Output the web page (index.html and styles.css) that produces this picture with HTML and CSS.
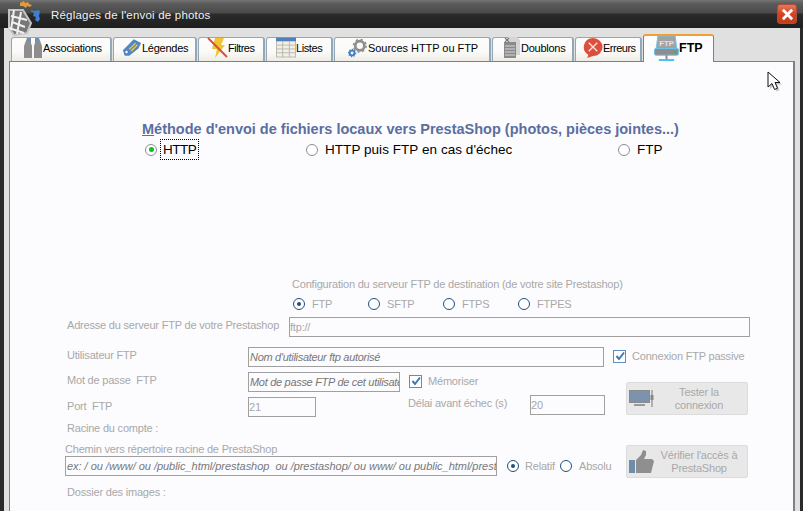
FILE: index.html
```html
<!DOCTYPE html>
<html lang="fr">
<head>
<meta charset="utf-8">
<title>Réglages de l'envoi de photos</title>
<link rel="stylesheet" href="styles.css">
</head>
<body>
<div class="window">
  <svg class="logo" width="44" height="38" viewBox="0 0 44 38">
    <path d="M20 3l4-2 1 2 3-1 1 2 3 1-2 2-3-1-1 2-3-2-3 0z" fill="#e09a3a"/>
    <path d="M31 10l4 1 3-1 2 1-1 5 1 3-2 3-3-2 1-3-3-1 1-3-3-2z" fill="#3f7fd0"/>
    <g fill="none" stroke="#c4c4c4" stroke-width="2">
      <path d="M9 10l14 0 8 13-4 10-13 2-5-7z" fill="#777"/>
      <path d="M11 16l16 4M12 22l13 5M9 28l15 5M14 10l-3 20M21 12l-4 22" stroke="#f0f0f0"/>
    </g>
  </svg>
  <header class="titlebar">
    <h1 class="title">Réglages de l'envoi de photos</h1>
    <button class="close" aria-label="Fermer">
      <svg width="13" height="13" viewBox="0 0 14 14"><path d="M2 2l10 10M12 2L2 12" stroke="#fff" stroke-width="3" fill="none"/></svg>
    </button>
  </header>
  <div class="client">
    <nav class="tabs">
      <div class="tab w-assoc">
        <svg class="ico" width="20" height="22" viewBox="0 0 20 22"><path d="M4 1h4v5l1 3v12H1V9z" fill="#8e8e8e"/><path d="M12 1h4l3 8v12h-8V9l1-3z" fill="#8e8e8e"/><path d="M4 1h4v3H4zM12 1h4v3h-4z" fill="#6f8fb5"/></svg>
        <span>Associations</span>
      </div>
      <div class="tab w-leg">
        <svg class="ico" width="20" height="19" viewBox="0 0 22 20"><path d="M1 13L13 1l8 4-3 6-10 8H3z" fill="#4f87c5"/><path d="M8 12l7-7M10 14l7-7" stroke="#e8c04a" stroke-width="1.6"/><circle cx="5" cy="15" r="1.3" fill="#fff"/></svg>
        <span>Légendes</span>
      </div>
      <div class="tab w-fil">
        <svg class="ico" width="21" height="22" viewBox="0 0 21 22"><path d="M8 1h9l-3 7h4L8 21l2-9H5z" fill="#f2c230"/><path d="M1 1l19 19" stroke="#d8503c" stroke-width="2"/></svg>
        <span>Filtres</span>
      </div>
      <div class="tab w-lis">
        <svg class="ico" width="20" height="21" viewBox="0 0 21 21"><rect x=".5" y=".5" width="20" height="20" fill="#f2efe6" stroke="#b8b8b0"/><rect width="21" height="4" fill="#4f81b8"/><path d="M7 4v17M14 4v17M0 8h21M0 12h21M0 16h21" stroke="#b8b8b0"/></svg>
        <span>Listes</span>
      </div>
      <div class="tab w-src">
        <svg class="ico" width="20" height="20" viewBox="0 0 22 21"><circle cx="13" cy="8" r="5" fill="none" stroke="#8e8e8e" stroke-width="3"/><circle cx="13" cy="8" r="7" fill="none" stroke="#8e8e8e" stroke-width="1.6" stroke-dasharray="2.5 3"/><circle cx="4.5" cy="16" r="2.6" fill="none" stroke="#3f7fc0" stroke-width="2"/><circle cx="4.5" cy="16" r="4" fill="none" stroke="#3f7fc0" stroke-width="1.2" stroke-dasharray="1.5 1.5"/></svg>
        <span>Sources HTTP ou FTP</span>
      </div>
      <div class="tab w-dbl">
        <svg class="ico" width="18" height="21" viewBox="0 0 18 21"><path d="M5 0h9l3 3v15H5z" fill="#d5d5d5"/><path d="M1 5h12v16H1z" fill="#8a8a8a"/><path d="M2 9h10M2 12h10M2 15h10M2 18h10" stroke="#d8d8d8"/><path d="M2 1l4 4M6 1L2 5" stroke="#777" stroke-width="1.2"/></svg>
        <span>Doublons</span>
      </div>
      <div class="tab w-err">
        <svg class="ico" width="20" height="20" viewBox="0 0 21 21"><path d="M10.500 0a10 9.500 0 0 1 0 19l-6 2 1-3.500A10 9.500 0 0 1 10.500 0z" fill="#dd4f3d"/><path d="M6 5l9 9M15 5l-9 9" stroke="#fbe4de" stroke-width="1.4"/></svg>
        <span>Erreurs</span>
      </div>
      <div class="tab tab-active">
        <svg class="ico ico-ftp" width="25" height="26" viewBox="0 0 26 27">
          <path d="M4 1h18l2 15H2z" fill="#a2a2a2" stroke="#6cc4ec"/>
          <text x="13" y="11" class="ico-text">FTP</text>
          <rect x=".5" y="14" width="25" height="7" rx="1.500" fill="#8e8e8e" stroke="#6cc4ec"/>
          <rect x="21" y="17" width="2" height="2" fill="#4caf50"/>
          <path d="M13 21v4" stroke="#888" stroke-width="2"/>
          <path d="M5 26h16" stroke="#49c0f0" stroke-width="2"/>
        </svg>
        <span>FTP</span>
      </div>
    </nav>
    <main class="panel">
      <h2 class="method-title"><u>M</u>éthode d'envoi de fichiers locaux vers PrestaShop (photos, pièces jointes...)</h2>
      <div class="method-row">
        <label class="method m1"><i class="mradio on"></i><span class="focus">HTTP</span></label>
        <label class="method m2"><i class="mradio"></i><span>HTTP puis FTP en cas d'échec</span></label>
        <label class="method"><i class="mradio"></i><span>FTP</span></label>
      </div>

      <div class="form">
        <p class="cfg-title">Configuration du serveur FTP de destination (de votre site Prestashop)</p>
        <div class="proto-row">
          <label class="proto"><i class="radio on"></i>FTP</label>
          <label class="proto"><i class="radio"></i>SFTP</label>
          <label class="proto"><i class="radio"></i>FTPS</label>
          <label class="proto"><i class="radio"></i>FTPES</label>
        </div>
        <div class="row r-addr">
          <span class="lab lab-addr">Adresse du serveur FTP de votre Prestashop</span>
          <span class="inp i-addr">ftp://</span>
        </div>
        <div class="row r-user">
          <span class="lab lab-main">Utilisateur FTP</span>
          <span class="inp hint i-user">Nom d'utilisateur ftp autorisé</span>
          <label class="chk c-pass"><i class="box"><svg width="10" height="10" viewBox="0 0 10 10"><path d="M1.500 5l2.500 3 5-6.500" fill="none" stroke="#3f78b5" stroke-width="2"/></svg></i>Connexion FTP passive</label>
        </div>
        <div class="cred">
          <div class="cred-left">
            <div class="row r-pwd">
              <span class="lab lab-main">Mot de passe&nbsp; FTP</span>
              <span class="inp hint i-pwd">Mot de passe FTP de cet utilisateur</span>
              <label class="chk c-mem"><i class="box"><svg width="10" height="10" viewBox="0 0 10 10"><path d="M1.500 5l2.500 3 5-6.500" fill="none" stroke="#3f78b5" stroke-width="2"/></svg></i>Mémoriser</label>
            </div>
            <div class="row r-port">
              <span class="lab lab-main">Port&nbsp; FTP</span>
              <span class="inp i-port">21</span>
              <span class="lab lab-delay">Délai avant échec (s)</span>
              <span class="inp i-delay">20</span>
            </div>
          </div>
          <button class="btn b-test">
            <svg width="25" height="18" viewBox="0 0 25 18"><rect x=".5" y=".5" width="20" height="12" fill="#7d93ad" stroke="#8a8a8a"/><path d="M5 15h11" stroke="#999" stroke-width="2"/><path d="M23 0v17" stroke="#777"/><rect x="21.500" y="5" width="3" height="5" fill="#888"/></svg>
            <span>Tester la connexion</span>
          </button>
        </div>
        <p class="lab racine">Racine du compte :</p>
        <div class="path">
          <div class="path-left">
            <p class="lab chemin">Chemin vers répertoire racine de PrestaShop</p>
            <div class="path-row">
              <span class="inp hint i-path">ex: / ou /www/ ou /public_html/prestashop&nbsp; ou /prestashop/ ou www/ ou public_html/prestashop/</span>
              <label class="proto p-rel"><i class="radio on"></i>Relatif</label>
              <label class="proto p-abs"><i class="radio"></i>Absolu</label>
            </div>
          </div>
          <button class="btn b-check">
            <svg width="25" height="24" viewBox="0 0 25 24"><rect y="10" width="6" height="13" fill="#6f8cab"/><path d="M7 10l5-5 2-5 3 1 0 4-2 4h8l2 2-3 12H7z" fill="#8f8f8f"/></svg>
            <span>Vérifier l'accès à PrestaShop</span>
          </button>
        </div>
        <p class="lab dossier">Dossier des images :</p>
      </div>
    </main>
  </div>
  <svg class="cursor" width="16" height="22" viewBox="0 0 16 22"><path d="M3 3v15l4-3.500 2.500 6 3-1.300-2.500-5.700h5z" fill="#444" opacity=".3"/><path d="M1 1v15l4-3.500 2.500 6 3-1.300-2.500-5.700h5z" fill="#fff" stroke="#111"/></svg>
</div>
</body>
</html>
```
FILE: styles.css
```css
* { box-sizing: border-box; }
html, body { margin: 0; padding: 0; }
body {
  width: 803px;
  height: 511px;
  overflow: hidden;
  background: #2a2a2a;
  font-family: "Liberation Sans", Arial, sans-serif;
}
.window { position: relative; width: 803px; height: 511px; overflow: hidden; }
.logo { position: absolute; left: 0; top: 0; z-index: 3; }
.cursor { position: absolute; left: 767px; top: 71px; z-index: 3; }

.titlebar {
  height: 28px;
  display: flex;
  align-items: center;
  justify-content: space-between;
  padding: 2px 6px 0 51px;
  background: linear-gradient(#747474 0, #5a5a5a 4px, #4a4a4a 13px, #2b2b2b 14px, #1e1e1e 28px);
}
.title { margin: 0; font-size: 11.500px; font-weight: 400; color: #eef2f4; letter-spacing: .2px; }
.close {
  width: 20px;
  height: 20px;
  margin-top: -2px;
  padding: 0;
  display: flex;
  align-items: center;
  justify-content: center;
  border: 1px solid #a8503c;
  border-radius: 3px;
  background: linear-gradient(#e8765c, #d8421e 50%, #c43a1c);
}

.client {
  height: 483px;
  margin: 0 3px 0 4px;
  padding-top: 6px;
  background: #e0e0e0;
}
.tabs {
  display: flex;
  align-items: flex-end;
  height: 27px;
  padding-left: 7px;
  gap: 1px;
  position: relative;
  z-index: 1;
}
.tab {
  display: flex;
  align-items: center;
  height: 24px;
  padding-left: 10px;
  padding-bottom: 4px;
  border: 1px solid #92a8b8;
  border-bottom: 0;
  border-right-width: 2px;
  border-radius: 3px 3px 0 0;
  background: linear-gradient(#fcfcfa, #fafaf8 60%, #eeece4);
  font-size: 11px;
  letter-spacing: -.25px;
  color: #000;
  white-space: nowrap;
}
.ico { flex: none; }
.w-assoc { width: 101px; padding-left: 11px; }
.w-leg { width: 84px; padding-left: 8px; }
.w-fil { width: 67px; padding-left: 8px; letter-spacing: -.5px; }
.w-lis { width: 67px; padding-left: 9px; letter-spacing: -.4px; }
.w-src { width: 157px; padding-left: 13px; letter-spacing: -.05px; }
.w-dbl { width: 82px; padding-left: 10px; }
.w-err { width: 67px; padding-left: 7px; letter-spacing: -.5px; }
.tab-active {
  width: 71px;
  height: 28px;
  padding-left: 10px;
  padding-bottom: 3px;
  border: 1px solid #808080;
  border-top: 2px solid #f0a030;
  border-bottom: 0;
  background: #fcfcff;
  font-size: 12.500px;
  font-weight: 700;
  letter-spacing: 0;
  margin-bottom: -1px;
}
.ico-ftp { align-self: flex-end; margin-bottom: -2px; }
.ico-text { font-family: "Liberation Sans", sans-serif; font-size: 8px; fill: #e4e4e4; text-anchor: middle; }

.panel {
  height: 460px;
  width: 786px;
  margin-left: 5px;
  border: 1px solid #808080;
  border-width: 1px 2px 0 1px;
  background: #fcfcff;
  position: relative;
}
.method-title {
  margin: 0;
  padding: 60px 0 0 132px;
  font-size: 14.500px;
  line-height: 15px;
  font-weight: 700;
  color: #5a6ea0;
  white-space: nowrap;
}
.method-row {
  display: flex;
  height: 15px;
  margin-top: 5px;
  padding-left: 135px;
  font-size: 13.500px;
  letter-spacing: .05px;
  color: #000;
}
.method { display: flex; align-items: center; gap: 7px; }
.m1 { width: 161px; }
.m2 { width: 312px; }
.mradio {
  width: 12px;
  height: 12px;
  border: 1px solid #8a8f98;
  border-radius: 50%;
  background: #fff;
  display: flex;
  align-items: center;
  justify-content: center;
}
.mradio.on::after { content: ""; width: 5px; height: 5px; border-radius: 50%; background: #10c020; }
.focus { outline: 1px dotted #000; padding: 2px 2px; margin: 0 0 0 -3px; letter-spacing: -.5px; }

.form { padding: 120px 0 0 57px; color: #a8a8a8; font-size: 11px; letter-spacing: -.2px; }
p { margin: 0; }
.cfg-title { padding-left: 225px; line-height: 14px; height: 14px; }
.proto-row { display: flex; height: 14px; margin-top: 6px; padding-left: 226px; }
.proto { display: flex; align-items: center; gap: 7px; }
.proto-row .proto { width: 75px; }
.radio {
  flex: none;
  width: 12px;
  height: 12px;
  border: 1px solid #1f4f80;
  border-radius: 50%;
  background: #fff;
  display: flex;
  align-items: center;
  justify-content: center;
}
.radio.on::after { content: ""; width: 4px; height: 4px; border-radius: 50%; background: #1f4f80; }

.row { display: flex; align-items: center; }
.inp {
  display: block;
  flex: none;
  height: 20px;
  line-height: 18px;
  padding-left: 0;
  border: 1px solid #a0a0a0;
  background: #fcfcff;
  color: #a8a8a8;
  overflow: hidden;
  white-space: nowrap;
}
.hint { font-style: italic; color: #777; padding-left: 1px; letter-spacing: -.3px; }
.lab { color: #a8a8a8; white-space: nowrap; }
.r-addr { margin-top: 6px; height: 20px; }
.lab-addr { width: 222px; margin-bottom: 4px; }
.i-addr { width: 461px; }
.r-user { margin-top: 10px; height: 20px; }
.lab-main { width: 181px; flex: none; margin-bottom: 4px; }
.i-user { width: 356px; }
.chk { display: flex; align-items: center; gap: 6px; margin-bottom: 2px; }
.box {
  flex: none;
  width: 13px;
  height: 13px;
  border: 1px solid #5f8dbf;
  background: #fff;
  display: flex;
  align-items: center;
  justify-content: center;
}
.c-pass { margin-left: 9px; }
.cred { display: flex; margin-top: 5px; height: 45px; }
.cred-left { width: 559px; }
.r-pwd { height: 20px; }
.i-pwd { width: 152px; }
.c-mem { margin-left: 9px; }
.r-port { height: 22px; margin-top: 3px; align-items: flex-start; }
.r-port .lab-main { margin-top: 5px; margin-bottom: 0; }
.i-port { width: 68px; margin-top: 2px; }
.lab-delay { width: 122px; margin-left: 92px; margin-top: 2px; }
.i-delay { width: 75px; }
.btn {
  flex: none;
  width: 122px;
  height: 33px;
  padding: 0 3px 0 2px;
  display: flex;
  align-items: center;
  border: 1px solid #dcdcdc;
  border-radius: 2px;
  background: #e8e8e8;
  color: #a8a8a8;
  font: inherit;
  letter-spacing: inherit;
  text-align: center;
  line-height: 13px;
}
.btn span { flex: 1; }
.b-test { margin-top: 10px; }
.b-check { margin-top: 1px; }
.racine { margin-top: 4px; line-height: 14px; height: 14px; }
.path { display: flex; margin-top: 9px; margin-left: -2px; height: 33px; }
.path-left { width: 561px; }
.chemin { line-height: 12px; height: 12px; margin-top: -1px; }
.path-row { display: flex; align-items: center; margin-top: 1px; height: 20px; }
.i-path { width: 432px; letter-spacing: -.03px; }
.p-rel { margin-left: 10px; gap: 6px; width: 53px; }
.p-abs { gap: 7px; }
.dossier { margin-top: 8px; line-height: 14px; }
```
